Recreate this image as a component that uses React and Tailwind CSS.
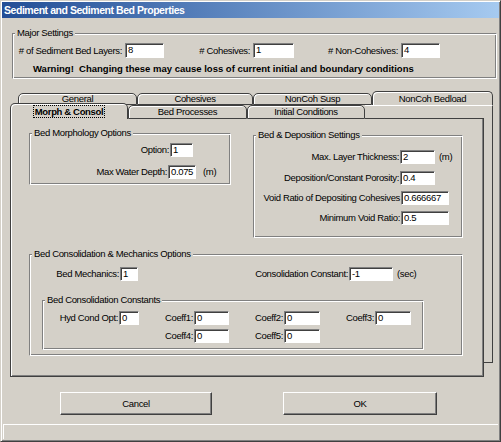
const ui = "font-['Liberation_Sans',Arial,sans-serif] text-[9.5px] tracking-[-0.35px] leading-[12px] text-black";

function Field({ value, className }) {
  return (
    <div className={`shrink-0 bg-white border border-t-[#808080] border-l-[#808080] border-r-white border-b-white shadow-[inset_1px_1px_0_#404040] pl-[2px] leading-[12px] overflow-hidden whitespace-nowrap ${className}`}>
      {value}
    </div>
  );
}

function Group({ title, className, children }) {
  return (
    <fieldset className={`shrink-0 border border-t-[#808080] border-l-[#808080] border-r-white border-b-white shadow-[inset_1px_1px_0_#fff,inset_-1px_-1px_0_#808080] ${className}`}>
      <legend className="ml-[2px] px-[2px] bg-[#d4d0c8] leading-[12px]">{title}</legend>
      {children}
    </fieldset>
  );
}

function Label({ text, className }) {
  return <div className={`shrink-0 text-right pr-[1px] whitespace-nowrap ${className}`}>{text}</div>;
}

function Tab({ label, className, selected }) {
  return (
    <div className={`shrink-0 bg-[#d4d0c8] border border-[#404040] rounded-t-[5px] shadow-[inset_1px_1px_0_#fff] flex items-center justify-center whitespace-nowrap ${selected ? 'border-b-0' : ''} ${className}`}>
      {selected ? (
        <span className="font-bold outline outline-1 outline-dotted outline-black px-[1px] leading-[11px]">{label}</span>
      ) : (
        label
      )}
    </div>
  );
}

function Button({ label, className }) {
  return (
    <div className={`h-[23px] shrink-0 border border-t-white border-l-white border-r-[#404040] border-b-[#404040] shadow-[inset_-1px_-1px_0_#808080] flex items-center justify-center ${className}`}>
      {label}
    </div>
  );
}

export default function App() {
  return (
    <div className={`w-[501px] h-[442px] bg-[#d4d0c8] border border-t-[#d4d0c8] border-l-[#d4d0c8] border-r-[#404040] border-b-[#404040] shadow-[inset_1px_1px_0_#fff,inset_-1px_-1px_0_#808080] p-px flex flex-col ${ui}`}>
      {/* title bar */}
      <div className="h-[16px] shrink-0 bg-linear-to-r from-[#234e96] to-[#a6caf0] flex items-center pl-[2px] text-white font-bold text-[10.5px] tracking-[-0.45px]">
        Sediment and Sediment Bed Properties
      </div>

      {/* major settings */}
      <Group title="Major Settings" className="mt-[9px] ml-[10px] w-[485px] h-[52px]">
        <div className="mt-[4px] flex items-center">
          <Label text="# of Sediment Bed Layers:" className="w-[112px] pr-[3px]" />
          <Field value="8" className="w-[39px] h-[15px]" />
          <Label text="# Cohesives:" className="w-[89px] pr-[3px]" />
          <Field value="1" className="w-[41px] h-[15px]" />
          <Label text="# Non-Cohesives:" className="w-[107px] pr-[3px]" />
          <Field value="4" className="w-[39px] h-[15px]" />
        </div>
        <div className="mt-[5px] pl-[20px] font-bold tracking-[0px] whitespace-nowrap">
          Warning!&nbsp; Changing these may cause loss of current initial and boundary conditions
        </div>
      </Group>

      {/* tab control */}
      <div className="mt-[12px] ml-[8px] w-[483px] flex flex-col shrink-0">
        <div className="h-[14px] flex items-end pl-[8px]">
          <Tab label="General" className="w-[119px] h-[12px]" />
          <Tab label="Cohesives" className="w-[116px] h-[12px]" />
          <Tab label="NonCoh Susp" className="w-[119px] h-[12px]" />
          <Tab label="NonCoh Bedload" className="w-[121px] h-[14px] border-b-0" />
        </div>
        <div className="flex items-start">
          <div className="w-[474px] flex flex-col">
            <div className="h-[14px] flex items-end">
              <Tab label="Morph & Consol" selected className="w-[118px] h-[16px]" />
              <Tab label="Bed Processes" className="w-[119px] h-[14px]" />
              <Tab label="Initial Conditions" className="w-[118px] h-[14px]" />
              <div className="flex-1 h-[14px] border-t border-t-white border-b border-b-[#404040]" />
            </div>
            <div className="h-[258px] border border-t-0 border-[#404040] shadow-[inset_1px_0_0_#fff,inset_-1px_-1px_0_#808080] pl-[18px] flex flex-col">
              <div className="flex items-start">
                <Group title="Bed Morphology Options" className="mt-[8px] w-[202px] h-[58px]">
                  <div className="mt-[4px] flex items-center">
                    <Label text="Option:" className="w-[140px]" />
                    <Field value="1" className="w-[23px] h-[14px]" />
                  </div>
                  <div className="mt-[8px] flex items-center">
                    <Label text="Max Water Depth:" className="w-[138px]" />
                    <Field value="0.075" className="w-[28px] h-[14px]" />
                    <span className="ml-[7px]">(m)</span>
                  </div>
                </Group>
                <Group title="Bed & Deposition Settings" className="mt-[10px] ml-[22px] w-[210px] h-[109px]">
                  <div className="mt-[9px] flex items-center">
                    <Label text="Max. Layer Thickness:" className="w-[146px]" />
                    <Field value="2" className="w-[35px] h-[14px]" />
                    <span className="ml-[4px]">(m)</span>
                  </div>
                  <div className="mt-[7px] flex items-center">
                    <Label text="Deposition/Constant Porosity:" className="w-[146px]" />
                    <Field value="0.4" className="w-[35px] h-[14px]" />
                  </div>
                  <div className="mt-[6px] flex items-center">
                    <Label text="Void Ratio of Depositing Cohesives" className="w-[147px]" />
                    <Field value="0.666667" className="w-[48px] h-[14px]" />
                  </div>
                  <div className="mt-[6px] flex items-center">
                    <Label text="Minimum Void Ratio:" className="w-[147px]" />
                    <Field value="0.5" className="w-[48px] h-[14px]" />
                  </div>
                </Group>
              </div>

              <Group title="Bed Consolidation & Mechanics Options" className="mt-[10px] w-[434px] h-[108px]">
                <div className="mt-[7px] flex items-center">
                  <Label text="Bed Mechanics:" className="w-[90px]" />
                  <Field value="1" className="w-[18px] h-[14px]" />
                  <Label text="Consolidation Constant:" className="w-[211px]" />
                  <Field value="-1" className="w-[44px] h-[14px]" />
                  <span className="ml-[4px]">(sec)</span>
                </div>
                <Group title="Bed Consolidation Constants" className="mt-[13px] ml-[12px] w-[382px] h-[56px]">
                  <div className="mt-[5px] flex items-center">
                    <Label text="Hyd Cond Opt:" className="w-[76px]" />
                    <Field value="0" className="w-[20px] h-[14px]" />
                    <Label text="Coeff1:" className="w-[55px]" />
                    <Field value="0" className="w-[35px] h-[14px]" />
                    <Label text="Coeff2:" className="w-[55px]" />
                    <Field value="0" className="w-[36px] h-[14px]" />
                    <Label text="Coeff3:" className="w-[55px]" />
                    <Field value="0" className="w-[36px] h-[14px]" />
                  </div>
                  <div className="mt-[4px] flex items-center">
                    <div className="w-[96px] shrink-0" />
                    <Label text="Coeff4:" className="w-[55px]" />
                    <Field value="0" className="w-[35px] h-[14px]" />
                    <Label text="Coeff5:" className="w-[55px]" />
                    <Field value="0" className="w-[36px] h-[14px]" />
                  </div>
                </Group>
              </Group>
            </div>
          </div>
          {/* edge of the page behind */}
          <div className="w-[9px] h-[258px] shrink-0 border-t border-t-white border-r border-r-[#404040] border-b border-b-[#404040]" />
        </div>
      </div>

      {/* buttons */}
      <div className="mt-[15px] flex">
        <Button label="Cancel" className="ml-[58px] w-[152px]" />
        <Button label="OK" className="ml-[71px] w-[154px]" />
      </div>

      {/* status bar */}
      <div className="mt-[9px] mx-[1px] h-[15px] border-t border-l border-t-white border-l-white" />
    </div>
  );
}
